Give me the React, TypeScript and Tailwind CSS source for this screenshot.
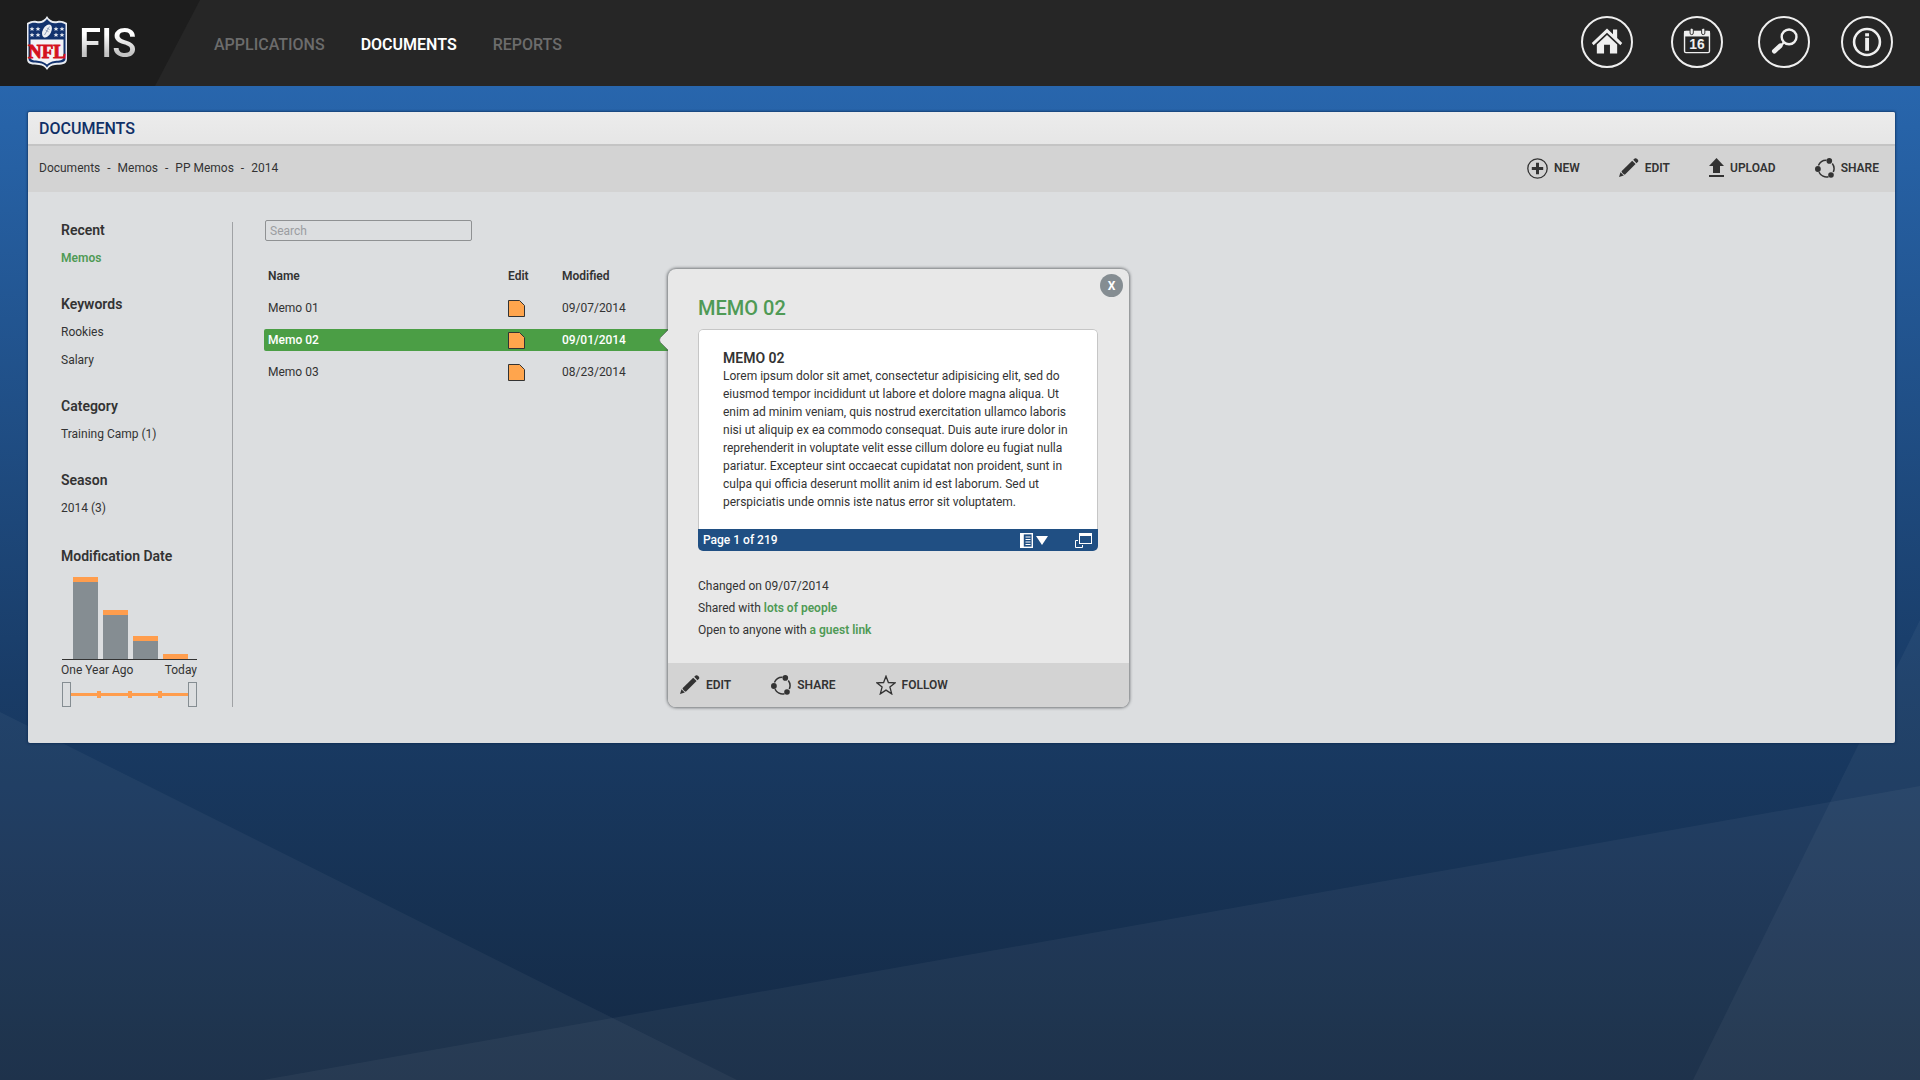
import { useState } from 'react'
import type { ReactNode } from 'react'

interface IconProps {
  className?: string
}

interface Memo {
  name: string
  modified: string
}

const memos: Memo[] = [
  { name: 'Memo 01', modified: '09/07/2014' },
  { name: 'Memo 02', modified: '09/01/2014' },
  { name: 'Memo 03', modified: '08/23/2014' }
]

const bars = [82, 49, 23, 5]

const filters = [
  { title: 'Recent', items: ['Memos'], active: true },
  { title: 'Keywords', items: ['Rookies', 'Salary'] },
  { title: 'Category', items: ['Training Camp (1)'] },
  { title: 'Season', items: ['2014 (3)'] }
]

const crumbs = ['Documents', 'Memos', 'PP Memos', '2014']

const ShieldLogo = () => (
  <svg viewBox="0 0 40 54" className="h-[54px] w-10" aria-hidden="true">
    <path
      d="M20 0 C18 4 14 6 9.500 5 C6 4.500 4 5 0 7 V43 C0 49 6 48.500 12 49 C16 49.500 18 51 20 54 C22 51 24 49.500 28 49 C34 48.500 40 49 40 43 V7 C36 5 34 4.500 30.500 5 C26 6 22 4 20 0 Z"
      fill="#e9ecf1"
    />
    <path
      d="M20 3 C17.500 6.500 14 8 9.500 7 C6 6.500 4 7 1.500 8.500 V42.500 C1.500 47 7 46.500 12 47 C16 47.500 18.500 49 20 51.500 C21.500 49 24 47.500 28 47 C33 46.500 38.500 47 38.500 42.500 V8.500 C36 7 34 6.500 30.500 7 C26 8 22.500 6.500 20 3 Z"
      fill="#12326e"
    />
    <path
      d="M3.500 23.500 H36.500 V41.500 C36.500 44.500 32 44.500 28 45 C24 45.500 21.500 47 20 48.500 C18.500 47 16 45.500 12 45 C8 44.500 3.500 44.500 3.500 41.500 Z"
      fill="#f4f4f6"
    />
    <g fill="#e9ecf1">
      {[5, 11, 29, 35].map((x) =>
        [13, 19].map((y) => (
          <path
            key={`${x}-${y}`}
            d={`M${x} ${y - 2.4} l.7 1.600 1.700.1 -1.300 1.100.5 1.700 -1.600 -1 -1.600 1 .5 -1.700 -1.300 -1.100 1.700 -.1z`}
          />
        ))
      )}
    </g>
    <ellipse cx="20" cy="15" rx="4.200" ry="7" transform="rotate(28 20 15)" fill="#eef0f4" />
    <path d="M17.500 19 L22.500 10.500 M18.500 14 l3 1.800 M19.800 12 l2.800 1.600" stroke="#7f8fae" strokeWidth=".8" />
    <text
      x="20"
      y="42"
      textAnchor="middle"
      fontFamily="Liberation Sans Narrow, Liberation Serif, serif"
      fontWeight="700"
      fontSize="19"
      fill="#d5121e"
      stroke="#d5121e"
      strokeWidth=".9"
    >
      NFL
    </text>
  </svg>
)

const HomeIcon = () => (
  <svg viewBox="0 0 52 52" className="size-[52px]" fill="#efefef" aria-hidden="true">
    <path d="M26 11.500 L9.500 27 11.500 29.500 26 16 40.500 29.500 42.500 27 37 21.800 V12.500 H32.500 V17.500 Z" />
    <path d="M26 18.500 L15 28.800 V38.500 H22.800 V29 H29.200 V38.500 H37 V28.800 Z" />
  </svg>
)

const CalendarIcon = () => (
  <svg viewBox="0 0 52 52" className="size-[52px]" aria-hidden="true">
    <rect x="12.500" y="14.500" width="27" height="23" rx="1.500" fill="none" stroke="#efefef" strokeWidth="1.500" />
    <path d="M12 14 H40 V20 H12 Z" fill="#efefef" />
    <rect x="18.500" y="11" width="3.500" height="7" rx="1.700" fill="#efefef" stroke="#262626" />
    <rect x="31" y="11" width="3.500" height="7" rx="1.700" fill="#efefef" stroke="#262626" />
    <text x="26" y="34" textAnchor="middle" fontFamily="Liberation Sans, sans-serif" fontWeight="700" fontSize="15" fill="#efefef">
      16
    </text>
  </svg>
)

const SearchIcon = () => (
  <svg viewBox="0 0 52 52" className="size-[52px]" fill="none" stroke="#efefef" aria-hidden="true">
    <circle cx="31.500" cy="20.500" r="8" strokeWidth="2.600" />
    <path d="M25.800 26.500 L23 29.500" strokeWidth="2.400" />
    <path d="M22 30 L15.500 36" strokeWidth="5" strokeLinecap="round" />
  </svg>
)

const InfoIcon = () => (
  <svg viewBox="0 0 52 52" className="size-[52px]" aria-hidden="true">
    <circle cx="26" cy="26" r="14" fill="none" stroke="#efefef" strokeWidth="2.800" />
    <rect x="24" y="16.500" width="4.200" height="3.400" fill="#efefef" />
    <rect x="24" y="21.500" width="4.200" height="14" fill="#efefef" />
  </svg>
)

const PlusIcon = ({ className }: IconProps) => (
  <svg viewBox="0 0 21 21" className={className} aria-hidden="true">
    <circle cx="10.500" cy="10.500" r="9.700" fill="none" stroke="currentColor" strokeWidth="1.300" />
    <path d="M10.500 4.800 V16.200 M4.800 10.500 H16.200" stroke="currentColor" strokeWidth="3" />
  </svg>
)

const PencilIcon = ({ className }: IconProps) => (
  <svg viewBox="0 0 20 20" className={className} fill="currentColor" aria-hidden="true">
    <path d="M0 19 L1.500 14.300 4.800 17.500 Z" />
    <path d="M2.500 13.300 L13.200 2.700 16.600 6 5.800 16.700 C4.500 16.500 3 15 2.500 13.300 Z" />
    <path d="M14.200 1.800 L15.700.5 C17 -.5 20.300 2 19 3.700 L17.500 5.200 Z" />
  </svg>
)

const UploadIcon = ({ className }: IconProps) => (
  <svg viewBox="0 0 15 20" className={className} fill="currentColor" aria-hidden="true">
    <path d="M7.500 0 L15 8 H11 V15 H4 V8 H0 Z" />
    <rect y="17" width="15" height="2" />
  </svg>
)

const ShareIcon = ({ className }: IconProps) => (
  <svg viewBox="0 0 20 20" className={className} fill="none" aria-hidden="true">
    <path d="M3.400 7.500 A8.500 8.500 0 0 1 11.500 2.300 M17.300 5.500 A8.500 8.500 0 0 1 18.300 14 M13.500 18.700 A8.500 8.500 0 0 1 4 14.200" stroke="currentColor" strokeWidth="1.500" />
    <circle cx="14.300" cy="2.900" r="2.800" fill="currentColor" />
    <circle cx="2.900" cy="11" r="2.900" fill="currentColor" />
    <circle cx="16" cy="17" r="2.800" fill="currentColor" />
  </svg>
)

const StarIcon = ({ className }: IconProps) => (
  <svg viewBox="0 0 20 20" className={className} fill="none" stroke="currentColor" strokeWidth="1.300" aria-hidden="true">
    <path d="M10 1.200 L12.400 7.500 19.200 7.800 13.900 12 15.700 18.900 10 15.100 4.300 18.900 6.100 12 .8 7.800 7.600 7.500 Z" />
  </svg>
)

const DocIcon = () => (
  <svg viewBox="0 0 17 17" className="size-[17px]" aria-hidden="true">
    <path d="M.5.5 H11.500 L16.500 5.500 V16.500 H.5 Z" fill="#ffa54d" stroke="#333" />
  </svg>
)

const RoundButton = ({ label, className, children }: { label: string; className?: string; children: ReactNode }) => (
  <button
    aria-label={label}
    className={`flex size-[52px] items-center justify-center rounded-full border-2 border-[#efefef] ${className ?? ''}`}
  >
    {children}
  </button>
)

const ActionButton = ({ icon, label }: { icon: ReactNode; label: string }) => (
  <button className="flex items-center gap-1.5 text-xs font-semibold">
    {icon}
    {label}
  </button>
)

const Backdrop = () => (
  <svg
    viewBox="0 0 1920 994"
    preserveAspectRatio="none"
    className="pointer-events-none absolute inset-0 size-full"
    aria-hidden="true"
  >
    <g fill="#fff" fillOpacity=".045">
      <path d="M0 626 L737 994 H0 Z" />
      <path d="M263 994 L1920 700 V994 Z" />
      <path d="M1693 994 L1920 534 V994 Z" />
    </g>
  </svg>
)

const Header = () => (
  <header className="flex h-[86px] items-stretch bg-[#262626]">
    <a
      href="#home"
      className="flex w-[200px] items-center gap-3 bg-[#1d1d1d] pl-[27px] [clip-path:polygon(0_0,100%_0,155px_100%,0_100%)]"
    >
      <ShieldLogo />
      <span className="bg-linear-to-b from-white from-30% to-[#c4c4c4] to-75% bg-clip-text pt-0.5 text-[40px] leading-10 font-medium text-transparent">
        FIS
      </span>
    </a>
    <nav className="flex items-center gap-9 pt-1 pl-[14px] text-base font-medium text-[#6c6c6c]">
      <a href="#applications">APPLICATIONS</a>
      <a href="#documents" aria-current="page" className="font-semibold text-white">DOCUMENTS</a>
      <a href="#reports">REPORTS</a>
    </nav>
    <div className="ml-auto flex items-center gap-[31px] pr-[27px] pb-0.5">
      <RoundButton label="Home" className="mr-[7px]"><HomeIcon /></RoundButton>
      <RoundButton label="Calendar" className="mr-1"><CalendarIcon /></RoundButton>
      <RoundButton label="Search"><SearchIcon /></RoundButton>
      <RoundButton label="Info"><InfoIcon /></RoundButton>
    </div>
  </header>
)

const thumb =
  'pointer-events-none absolute inset-0 size-full appearance-none bg-transparent [&::-webkit-slider-thumb]:pointer-events-auto [&::-webkit-slider-thumb]:h-[25px] [&::-webkit-slider-thumb]:w-[9px] [&::-webkit-slider-thumb]:appearance-none [&::-webkit-slider-thumb]:border [&::-webkit-slider-thumb]:border-[#858d92] [&::-webkit-slider-thumb]:bg-[#dcdee0]'

const DateChart = () => (
  <section className="w-[136px] pt-0.5">
    <h2 className="text-sm leading-5 font-semibold whitespace-nowrap">Modification Date</h2>
    <div className="mt-[10px] ml-px flex h-[84px] items-end gap-[5px] border-b border-[#333] pl-[11px]">
      {bars.map((height) => (
        <div key={height} className="w-[25px] border-t-[5px] border-[#ff9d4d] bg-[#858d92]" style={{ height }} />
      ))}
    </div>
    <div className="flex justify-between text-xs leading-5">
      <span>One Year Ago</span>
      <span>Today</span>
    </div>
    <div className="relative mt-0.5 ml-px flex h-[25px] items-center">
      <div className="mx-2 flex h-[3px] flex-1 items-center justify-evenly bg-[#ff9d4d]">
        <span className="h-[7px] w-1 bg-[#ff9d4d]" />
        <span className="h-[7px] w-1 bg-[#ff9d4d]" />
        <span className="h-[7px] w-1 bg-[#ff9d4d]" />
      </div>
      <input type="range" aria-label="From" defaultValue={0} className={thumb} />
      <input type="range" aria-label="To" defaultValue={100} className={thumb} />
    </div>
  </section>
)

const Sidebar = () => (
  <aside className="w-[171px] shrink-0">
    {filters.map(({ title, items, active }) => (
      <section key={title} className="mb-[26px]">
        <h2 className="text-sm leading-5 font-semibold">{title}</h2>
        <ul>
          {items.map((item) => (
            <li key={item} className="mt-2 text-xs leading-5">
              <a href="#filter" className={active ? 'font-semibold text-[#4f9a55]' : ''}>{item}</a>
            </li>
          ))}
        </ul>
      </section>
    ))}
    <DateChart />
  </aside>
)

const MemoPopover = ({ onClose }: { onClose: () => void }) => (
  <div
    role="dialog"
    aria-labelledby="memo-title"
    className="absolute top-[49px] left-full w-[461px] rounded-lg bg-[#e8e8e8] shadow-[0_0_3px_1px_rgba(60,64,68,0.65)]"
  >
    <svg viewBox="0 0 10 22" className="absolute top-[60px] -left-[9px] h-[22px] w-[10px]" aria-hidden="true">
      <path d="M10 0 L1.500 8.500 Q-.5 11 1.500 13.500 L10 22 Z" fill="#e8e8e8" />
      <path d="M9 1 L1.500 8.500 Q-.5 11 1.500 13.500 L9 21" fill="none" stroke="#3c4044" strokeOpacity=".45" />
    </svg>
    <button
      aria-label="Close"
      onClick={onClose}
      className="absolute top-[5px] right-1.5 flex size-[23px] items-center justify-center rounded-full bg-[#858d92] text-xs leading-none font-bold text-white"
    >
      X
    </button>
    <div className="pt-[27px] pr-[31px] pb-[22px] pl-[30px]">
      <h2 id="memo-title" className="text-xl leading-6 font-medium text-[#4f9a55]">MEMO 02</h2>
      <div className="mt-[9px] overflow-hidden rounded-[5px]">
        <div className="rounded-t-[5px] border border-b-0 border-[#c6c6c6] bg-white pt-[19px] pr-4 pb-[18px] pl-6 text-xs leading-[18px]">
          <h3 className="text-sm leading-[18px] font-semibold">MEMO 02</h3>
          <p>
            Lorem ipsum dolor sit amet, consectetur adipisicing elit, sed do<br />
            eiusmod tempor incididunt ut labore et dolore magna aliqua. Ut<br />
            enim ad minim veniam, quis nostrud exercitation ullamco laboris<br />
            nisi ut aliquip ex ea commodo consequat. Duis aute irure dolor in<br />
            reprehenderit in voluptate velit esse cillum dolore eu fugiat nulla<br />
            pariatur. Excepteur sint occaecat cupidatat non proident, sunt in<br />
            culpa qui officia deserunt mollit anim id est laborum. Sed ut<br />
            perspiciatis unde omnis iste natus error sit voluptatem.
          </p>
        </div>
        <div className="flex h-[22px] items-center bg-[#204f83] pr-[6px] pl-[5px] text-xs font-medium text-white">
          <span>Page 1 of 219</span>
          <button aria-label="Page list" className="mr-[27px] ml-auto">
            <svg viewBox="0 0 28 15" className="h-[15px] w-7" aria-hidden="true">
              <rect x=".7" y=".7" width="11.600" height="13.600" fill="none" stroke="#fff" strokeWidth="1.400" />
              <path d="M2.300 0 V15" stroke="#fff" strokeWidth="3" />
              <path d="M5.500 4 H10.500 M5.500 6.500 H10.500 M5.500 9 H10.500 M5.500 11.500 H10.500" stroke="#fff" />
              <path d="M16 3 H28 L22 12 Z" fill="#fff" />
            </svg>
          </button>
          <button aria-label="Open in window">
            <svg viewBox="0 0 17 15" className="h-[15px] w-[17px]" fill="none" stroke="#fff" aria-hidden="true">
              <rect x="4.500" y=".5" width="12" height="10" />
              <path d="M4 1.500 H17" strokeWidth="3" />
              <path d="M3 7.500 H.5 V14.500 H7.500 V12" />
            </svg>
          </button>
        </div>
      </div>
      <div className="mt-6 text-xs leading-[22px]">
        <p>Changed on 09/07/2014</p>
        <p>Shared with <a href="#people" className="font-semibold text-[#4f9a55]">lots of people</a></p>
        <p>Open to anyone with <a href="#guest" className="font-semibold text-[#4f9a55]">a guest link</a></p>
      </div>
    </div>
    <div className="flex h-11 items-center gap-10 rounded-b-lg bg-[#d3d3d3] pl-3">
      <ActionButton icon={<PencilIcon className="size-5" />} label="EDIT" />
      <ActionButton icon={<ShareIcon className="size-5" />} label="SHARE" />
      <ActionButton icon={<StarIcon className="size-5" />} label="FOLLOW" />
    </div>
  </div>
)

const MemoTable = () => {
  const [selected, setSelected] = useState<string | null>('Memo 02')

  return (
    <div className="relative ml-[31px] w-[404px] shrink-0">
      <input
        type="search"
        placeholder="Search"
        aria-label="Search"
        className="ml-px block h-[21px] w-[207px] rounded-xs border border-[#8f9193] px-1 text-xs placeholder:text-[#9b9da0]"
      />
      <table className="mt-[14px] w-full border-separate border-spacing-x-0 border-spacing-y-[10px] text-left text-xs">
        <thead>
          <tr className="h-[22px]">
            <th className="w-[243px] pl-1 font-semibold">Name</th>
            <th className="w-[55px] pl-px font-semibold">Edit</th>
            <th className="font-semibold">Modified</th>
          </tr>
        </thead>
        <tbody>
          {memos.map(({ name, modified }) => {
            const active = name === selected
            return (
              <tr
                key={name}
                onClick={() => setSelected(name)}
                className={`h-[22px] ${active ? 'bg-[#4b9e45] font-medium text-white' : ''}`}
              >
                <td className="rounded-l-xs pl-1">{name}</td>
                <td className="pl-px">
                  <button aria-label={`Edit ${name}`} className="block"><DocIcon /></button>
                </td>
                <td>{modified}</td>
              </tr>
            )
          })}
        </tbody>
      </table>
      {selected && <MemoPopover onClose={() => setSelected(null)} />}
    </div>
  )
}

export default function App() {
  return (
    <div className="flex min-h-screen flex-col font-['Roboto',sans-serif] text-[#333]">
      <Header />
      <main className="relative flex-1 bg-linear-to-b from-[#2866ad] via-[#193c67] via-60% to-[#142943] px-7 pt-[26px] pr-[25px]">
        <Backdrop />
        <div className="relative rounded-xs bg-[#dcdee0] shadow-[0_0_2px_1px_rgba(10,40,80,0.6)]">
          <h1 className="flex h-8 items-center rounded-t-xs bg-linear-to-b from-[#ececec] to-[#e6e6e6] pt-0.5 pl-[11px] text-base font-medium text-[#0f2f66]">
            DOCUMENTS
          </h1>
          <div className="flex h-12 items-center justify-between border-t-2 border-[#c4c4c4] bg-[#d3d3d3] pr-4 pb-0.5 pl-[11px]">
            <nav className="flex text-xs">
              {crumbs.map((crumb, i) => (
                <span key={crumb} className="flex">
                  {i > 0 && <span className="px-[7px]">-</span>}
                  <a href="#crumb">{crumb}</a>
                </span>
              ))}
            </nav>
            <div className="flex items-center gap-[39px]">
              <ActionButton icon={<PlusIcon className="size-[21px]" />} label="NEW" />
              <ActionButton icon={<PencilIcon className="size-5" />} label="EDIT" />
              <ActionButton icon={<UploadIcon className="h-5 w-[15px]" />} label="UPLOAD" />
              <ActionButton icon={<ShareIcon className="size-5" />} label="SHARE" />
            </div>
          </div>
          <div className="flex pt-7 pb-9 pl-[33px]">
            <Sidebar />
            <div className="mt-0.5 w-px bg-[#a0a2a5]" />
            <MemoTable />
          </div>
        </div>
      </main>
    </div>
  )
}
